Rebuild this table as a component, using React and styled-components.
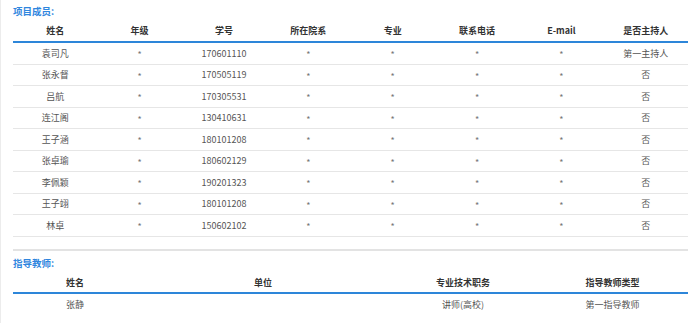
import React from "react";
import styled, { createGlobalStyle } from "styled-components";

const Global = createGlobalStyle`
  html, body { margin: 0; padding: 0; background: #fff; }
  body {
    font-family: "Microsoft YaHei", "Noto Sans CJK SC", "Noto Sans", sans-serif;
    font-size: 9px;
    color: #555;
  }
`;

const Page = styled.div`
  width: 700px;
  height: 323px;
  box-sizing: border-box;
  border-left: 1px solid #ececec;
  padding: 0 12px 0 12px;
  overflow: hidden;
`;

const Section = styled.section`
  padding-bottom: ${(p) => p.$pb || 0}px;
  border-bottom: ${(p) => (p.$divider ? "2px solid #e3e3e3" : "none")};
`;

const Title = styled.div`
  height: ${(p) => p.$h}px;
  line-height: ${(p) => p.$lh}px;
  font-weight: bold;
  color: #2f86de;
  font-size: 9.5px;
`;

const Row = styled.div`
  display: grid;
  grid-template-columns: ${(p) => p.$cols};
  height: ${(p) => p.$h}px;
  align-items: center;
  box-sizing: border-box;
  border-bottom: ${(p) => p.$border};
`;

const HeadCell = styled.div`
  text-align: center;
  font-weight: bold;
  color: #333;
  white-space: nowrap;
`;

const Cell = styled.div`
  text-align: center;
  white-space: nowrap;
  padding-top: ${(p) => (p.$star ? 3 : 0)}px;
  color: ${(p) => (p.$star ? "#777" : "#555")};
`;

const memberCols = "repeat(8, 1fr)";
const memberHead = ["姓名", "年级", "学号", "所在院系", "专业", "联系电话", "E-mail", "是否主持人"];
const members = [
  ["袁司凡", "170601110", "第一主持人"],
  ["张永督", "170505119", "否"],
  ["吕航", "170305531", "否"],
  ["连江阁", "130410631", "否"],
  ["王子涵", "180101208", "否"],
  ["张卓瑜", "180602129", "否"],
  ["李佩颖", "190201323", "否"],
  ["王子翊", "180101208", "否"],
  ["林卓", "150602102", "否"],
];

const teacherCols = "124fr 252fr 148fr 151fr";
const teacherHead = ["姓名", "单位", "专业技术职务", "指导教师类型"];

export default function App() {
  return (
    <Page>
      <Global />
      <Section $divider $pb={12}>
        <Title $h={20} $lh={23}>项目成员:</Title>
        <Row $cols={memberCols} $h={23} $border="2px solid #2d86d9">
          {memberHead.map((h) => (
            <HeadCell key={h}>{h}</HeadCell>
          ))}
        </Row>
        {members.map(([name, id, role], i) => (
          <Row key={i} $cols={memberCols} $h={21.5} $border="1px solid #e6e6e6">
            <Cell>{name}</Cell>
            <Cell $star>*</Cell>
            <Cell>{id}</Cell>
            <Cell $star>*</Cell>
            <Cell $star>*</Cell>
            <Cell $star>*</Cell>
            <Cell $star>*</Cell>
            <Cell>{role}</Cell>
          </Row>
        ))}
      </Section>
      <Section>
        <Title $h={22} $lh={24}>指导教师:</Title>
        <Row $cols={teacherCols} $h={21} $border="2px solid #2d86d9">
          {teacherHead.map((h) => (
            <HeadCell key={h}>{h}</HeadCell>
          ))}
        </Row>
        <Row $cols={teacherCols} $h={22} $border="none">
          <Cell>张静</Cell>
          <Cell></Cell>
          <Cell>讲师(高校)</Cell>
          <Cell>第一指导教师</Cell>
        </Row>
      </Section>
    </Page>
  );
}
